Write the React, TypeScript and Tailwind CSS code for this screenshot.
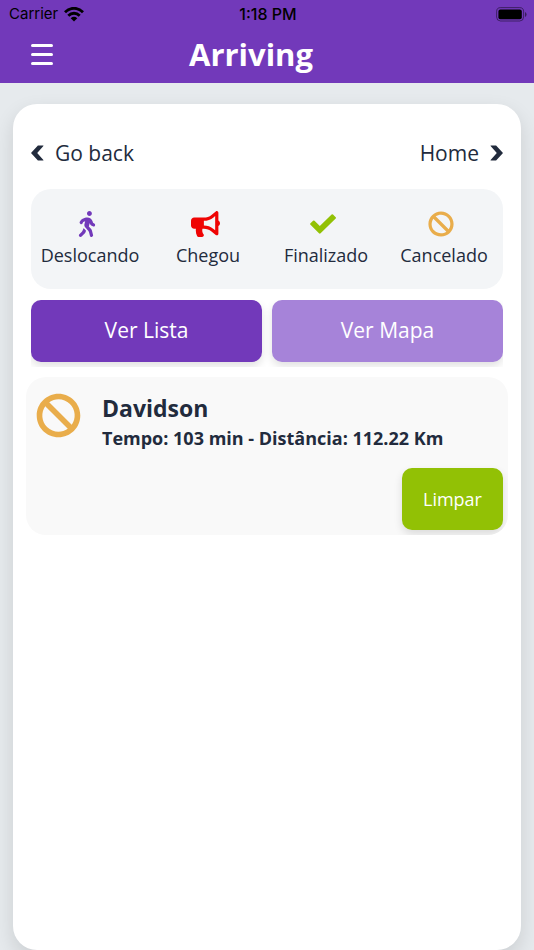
import { FaBan, FaBullhorn, FaWalking } from "react-icons/fa";

const statuses = [
  { label: "Deslocando", icon: <FaWalking className="size-[26px] text-[#7239ba]" /> },
  { label: "Chegou", icon: <FaBullhorn className="h-[26px] w-[29px] text-[#ef0404]" /> },
  { label: "Finalizado", icon: <CheckIcon /> },
  { label: "Cancelado", icon: <FaBan className="size-[26px] text-[#e9ad4b]" /> },
];

function CheckIcon() {
  return (
    <svg viewBox="0 0 26 20" className="h-5 w-[26px]" fill="#92c105" aria-hidden="true">
      <path d="M.5 9.2 3.1 6.7Q3.8 6.1 4.5 6.8L9.8 11.9 21.6.5Q22.3-.1 23 .5L25.7 3.2Q26.3 3.9 25.7 4.6L10.6 19.3Q9.8 20 9 19.3L.5 10.7Q-.2 9.9.5 9.2Z" />
    </svg>
  );
}

function Chevron({ className = "" }: { className?: string }) {
  return (
    <svg viewBox="0 0 13 16" className={`h-4 w-[13px] ${className}`} fill="#222b3d" aria-hidden="true">
      <path d="M0 8 6.9.4H12.4V1L6.2 8 12.4 15V15.6H6.9Z" />
    </svg>
  );
}

function StatusBar() {
  return (
    <div className="grid h-7 grid-cols-3 items-center pr-[7px] pl-[9px] font-['Inter',sans-serif] text-base text-black">
      <div className="flex items-center gap-1.5 text-[15px]">
        <span>Carrier</span>
        <svg viewBox="0 0 20 15" className="h-[15px] w-5" aria-hidden="true">
          <g fill="none" stroke="currentColor" strokeWidth="2.8">
            <path d="M1 5.3C6-.1 14-.1 19 5.3" />
            <path d="M4.3 8.8C7.6 5.4 12.4 5.4 15.7 8.8" />
          </g>
          <path d="M6.7 11.3Q10 8.4 13.3 11.3L10 14.6Z" fill="currentColor" />
        </svg>
      </div>
      <span className="text-center font-medium">1:18 PM</span>
      <svg viewBox="0 0 31 15" className="h-[15px] w-[31px] justify-self-end" aria-hidden="true">
        <rect x=".6" y=".6" width="27" height="13.4" rx="4" fill="none" stroke="#000" strokeOpacity=".45" />
        <rect x="2.4" y="2.4" width="23.4" height="9.8" rx="2" />
        <path d="M29 5v5q1.6-.8 1.6-2.5T29 5Z" fillOpacity=".5" />
      </svg>
    </div>
  );
}

export default function App() {
  return (
    <div className="flex min-h-screen flex-col bg-[#e6eaed] font-['Open_Sans',sans-serif] text-[#222b3d]">
      <header className="bg-[#7239ba] text-white">
        <StatusBar />
        <div className="grid grid-cols-[64px_1fr_64px] items-center pb-[3px]">
          <button type="button" aria-label="Menu" className="flex h-[52px] flex-col justify-center gap-1.5 pl-[31px]">
            <span className="h-[3px] w-[22px] rounded-full bg-white" />
            <span className="h-[3px] w-[22px] rounded-full bg-white" />
            <span className="h-[3px] w-[22px] rounded-full bg-white" />
          </button>
          <h1 className="pr-8 text-center text-[31px] leading-10 font-bold">Arriving</h1>
        </div>
      </header>

      <main className="mx-[13px] mt-[21px] flex-1 rounded-3xl bg-white px-[13px] pt-[33px] shadow-[0_8px_20px_rgba(0,0,0,0.12)]">
        <nav className="mx-[5px] flex items-center justify-between text-[21px] leading-8">
          <a href="#back" className="flex items-center gap-[11px]">
            <Chevron />
            Go back
          </a>
          <a href="#home" className="flex items-center gap-[11px]">
            Home
            <Chevron className="rotate-180" />
          </a>
        </nav>

        <ul className="mx-[5px] mt-5 grid h-[100px] grid-cols-4 rounded-[20px] bg-[#f3f5f7] pt-[22px]">
          {statuses.map((s) => (
            <li key={s.label} className="flex flex-col items-center gap-[5px] text-lg leading-[26px]">
              <span className="flex h-[26px] items-center pr-1.5">{s.icon}</span>
              {s.label}
            </li>
          ))}
        </ul>

        <div className="mx-[5px] mt-[11px] grid grid-cols-2 gap-2.5 overflow-hidden pb-[5px] text-[21px] text-white">
          <button type="button" className="h-[62px] rounded-[10px] bg-[#7239ba] shadow-[0_4px_8px_rgba(0,0,0,0.12)]">
            Ver Lista
          </button>
          <button type="button" className="h-[62px] rounded-[10px] bg-[#a683d9] shadow-[0_4px_8px_rgba(0,0,0,0.12)]">
            Ver Mapa
          </button>
        </div>

        <article className="mt-2.5 overflow-hidden rounded-[20px] bg-[#f9f9f9] px-[5px] pt-[15px] pb-[5px]">
          <div className="flex items-center gap-[21px] pl-[5px]">
            <FaBan className="mb-3.5 size-[45px] text-[#e9ad4b]" />
            <div>
              <h2 className="text-[23px] leading-8 font-bold">Davidson</h2>
              <p className="text-lg leading-7 font-bold">Tempo: 103 min - Distância: 112.22 Km</p>
            </div>
          </div>
          <div className="mt-4 flex justify-end">
            <button
              type="button"
              className="h-[62px] w-[101px] rounded-[10px] bg-[#92c105] text-lg text-white shadow-[0_4px_8px_rgba(0,0,0,0.12)]"
            >
              Limpar
            </button>
          </div>
        </article>
      </main>
    </div>
  );
}
